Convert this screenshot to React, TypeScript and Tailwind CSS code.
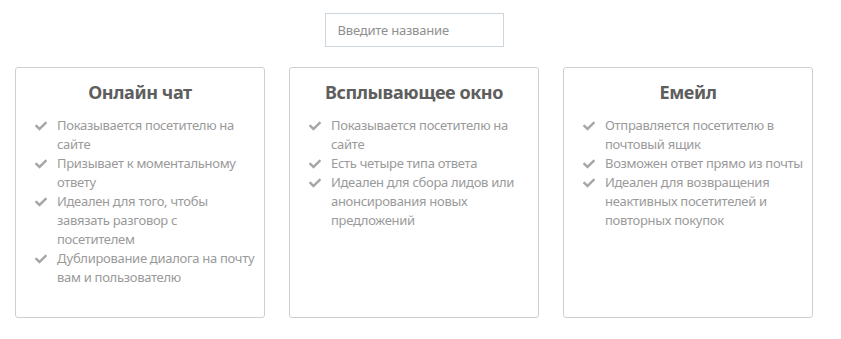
import { FaCheck } from "react-icons/fa";

const cards = [
  {
    title: "Онлайн чат",
    items: [
      "Показывается посетителю на сайте",
      "Призывает к моментальному ответу",
      "Идеален для того, чтобы завязать разговор с посетителем",
      "Дублирование диалога на почту вам и пользователю",
    ],
  },
  {
    title: "Всплывающее окно",
    items: [
      "Показывается посетителю на сайте",
      "Есть четыре типа ответа",
      "Идеален для сбора лидов или анонсирования новых предложений",
    ],
  },
  {
    title: "Емейл",
    items: [
      "Отправляется посетителю в почтовый ящик",
      "Возможен ответ прямо из почты",
      "Идеален для возвращения неактивных посетителей и повторных покупок",
    ],
  },
];

export default function App() {
  return (
    <div
      className="w-[841px] h-[339px] bg-white pt-[13px]"
      style={{ fontFamily: '"Noto Sans", "Open Sans", sans-serif' }}
    >
      <div className="flex justify-center pr-[13px]">
        <input
          className="w-[179px] h-[34px] border border-[#ccd6df] px-[12px] text-[13px] tracking-[-0.2px] text-[#555] placeholder-[#8f8f8f] outline-none"
          placeholder="Введите название"
        />
      </div>

      <div className="flex gap-[24px] pl-[15px] mt-[20px]">
        {cards.map((card) => (
          <div
            key={card.title}
            className="w-[250px] h-[251px] border border-[#cfcfcf] rounded-[3px] pt-[11px] pl-[19px] pr-[9px]"
          >
            <h3 className="text-center pr-[10px] text-[18px] tracking-[-0.4px] font-bold text-[#5e5e5e] leading-[26px] mb-[11px]">
              {card.title}
            </h3>
            <ul className="flex flex-col">
              {card.items.map((item) => (
                <li key={item} className="flex items-start">
                  <FaCheck className="w-[12px] h-[12px] mt-[4px] mr-[10px] shrink-0 text-[#a6a6a6]" />
                  <span className="text-[13px] tracking-[-0.3px] leading-[19px] text-[#9a9a9a]">
                    {item}
                  </span>
                </li>
              ))}
            </ul>
          </div>
        ))}
      </div>
    </div>
  );
}
